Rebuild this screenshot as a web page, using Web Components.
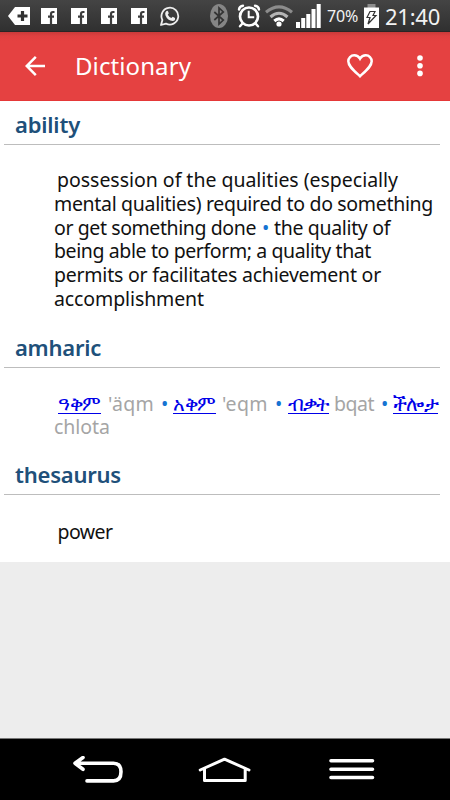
<!DOCTYPE html>
<html lang="en">
<head>
    <meta charset="UTF-8">
    <meta name="viewport" content="width=device-width, initial-scale=1.0">
    <title>Dictionary</title>
    <style>
        body {
            margin: 0;
            width: 450px;
            height: 800px;
            overflow: hidden;
            background: #ededed;
            font-family: "Noto Sans", "Open Sans", sans-serif;
        }
    </style>
</head>
<body>
    <dictionary-screen></dictionary-screen>

    <script>
        // Text run that spreads its letters over a given width
        class FitText extends HTMLElement {
            constructor() {
                super();
                this.attachShadow({ mode: 'open' });
                this.shadowRoot.innerHTML = `
                    <style>
                        :host { display: block; flex: none; }
                        span { display: inline-block; vertical-align: top; white-space: pre; }
                    </style>
                    <span><slot></slot></span>
                `;
            }

            connectedCallback() {
                const width = Number(this.getAttribute('width'));
                const span = this.shadowRoot.querySelector('span');
                const natural = span.getBoundingClientRect().width;
                const count = [...this.textContent].length;
                span.style.letterSpacing = (width - natural) / count + 'px';
                this.style.width = width + 'px';
                this.style.marginLeft = (this.getAttribute('gap') || 0) + 'px';
            }
        }

        class StatusBar extends HTMLElement {
            constructor() {
                super();
                this.attachShadow({ mode: 'open' });
                const facebook = `
                    <svg class="fb" width="16" height="16" viewBox="0 0 16 16">
                        <path fill="#fff" d="M0 0h16v16H0z"/>
                        <path fill="none" stroke="#3c3c3c" stroke-width="2.2" d="M13.500 4h-1.500Q10 4 10 6.200V16M7 8.600h6"/>
                    </svg>`;
                this.shadowRoot.innerHTML = `
                    <style>
                        :host {
                            display: flex;
                            align-items: center;
                            box-sizing: border-box;
                            height: 32px;
                            padding-left: 8px;
                            background: linear-gradient(#444, #303030);
                            border-bottom: 1px solid #292525;
                            color: #f2f2f2;
                        }
                        svg { flex: none; display: block; }
                        .add { margin-right: -3px; }
                        .fb { margin-left: 14px; }
                        .percent { font-size: 16px; line-height: 32px; }
                        .clock { font-size: 22px; line-height: 32px; }
                    </style>
                    <svg class="add" width="22" height="18" viewBox="0 0 22 18">
                        <path fill="#fff" d="M7 0h15v18H7L0 9z"/>
                        <path stroke="#333" stroke-width="3.2" d="M9.5 9h10M14.5 4v10"/>
                    </svg>
                    ${facebook}${facebook}${facebook}${facebook}
                    <svg style="margin-left:13px" width="20" height="20" viewBox="0 0 20 20">
                        <path fill="none" stroke="#eee" stroke-width="1.8" stroke-linejoin="round" d="M1 19l1.4-5A8.4 8.4 0 1 1 6 17.6z"/>
                        <path fill="#eee" d="M6.2 5.2Q7.6 4.1 8.1 5.6l.7 1.7-1 1.4Q9 11 11.4 12.1l1.3-1.3 2.3 1.1q.6 2.7-2.3 3.1Q7.6 14.9 5.4 9.3q-.8-2.5.8-4.1z"/>
                    </svg>
                    <svg style="margin-left:30px" width="18" height="24" viewBox="0 0 18 24">
                        <ellipse cx="9" cy="12" rx="9" ry="12" fill="#858585"/>
                        <path fill="none" stroke="#343434" stroke-width="1.7" d="M4.3 8l9 8L9 20V4l4.3 4-9 8"/>
                    </svg>
                    <svg style="margin-left:9px" width="24" height="24" viewBox="0 0 24 24">
                        <g fill="none" stroke="#fff">
                            <circle cx="12" cy="12.5" r="9" stroke-width="2.7"/>
                            <path stroke-width="2" d="M11.7 6.8v6.4h5.5"/>
                            <path stroke-width="2.4" stroke-linecap="round" d="M2 5.5Q2.5 2 6 1.7M22 5.5Q21.5 2 18 1.7M5 20l-2 2.3M19 20l2 2.3"/>
                        </g>
                    </svg>
                    <svg style="margin-left:4px" width="28" height="22" viewBox="0 0 28 22">
                        <g fill="none" stroke-width="3.1">
                            <path stroke="#8c8c8c" d="M1 7.3Q14-3.7 27 7.3"/>
                            <path stroke="#b5b5b5" d="M5.5 12Q14 4.5 22.5 12"/>
                            <path stroke="#fff" d="M9.3 16Q14 11.8 18.7 16"/>
                        </g>
                        <circle cx="14" cy="19" r="2.6" fill="#fff"/>
                    </svg>
                    <svg style="margin-left:3px" width="25" height="24" viewBox="0 0 25 24">
                        <path fill="#fff" d="M0 18h4v6H0zM5.2 14h4v10h-4zM10.3 10h4v14h-4zM15.5 5h4v19h-4zM20.7 0h4v24h-4z"/>
                    </svg>
                    <fit-text class="percent" width="31" gap="6">70%</fit-text>
                    <svg style="margin-left:6px" width="15" height="24" viewBox="0 0 15 24">
                        <path fill="#8c8c8c" d="M3.5 0h8v4h-8z"/>
                        <path fill="#fff" d="M0 3.5h15V24H0z"/>
                        <path fill="none" stroke="#333" stroke-width="1.2" d="M6 7.5h5L9 11.5h3L4 20l2-6.5H3z"/>
                    </svg>
                    <fit-text class="clock" width="55" gap="6">21:40</fit-text>
                `;
            }
        }

        class AppBar extends HTMLElement {
            constructor() {
                super();
                this.attachShadow({ mode: 'open' });
                this.shadowRoot.innerHTML = `
                    <style>
                        :host {
                            display: flex;
                            align-items: center;
                            box-sizing: border-box;
                            height: 69px;
                            padding-left: 25px;
                            background: linear-gradient(#c93a3a, #e04040 4px, #e54141 9px);
                            border-bottom: 1px solid #e53838;
                            color: #fff;
                            font-size: 24px;
                            line-height: 70px;
                        }
                        svg { flex: none; display: block; }
                    </style>
                    <svg width="20" height="20" viewBox="0 0 20 20">
                        <path fill="none" stroke="#fff" stroke-width="2.5" d="M20 10H2M10.8.9L1.7 10l9.1 9.1"/>
                    </svg>
                    <fit-text width="116" gap="30">Dictionary</fit-text>
                    <svg style="margin-left:156px" width="26" height="24" viewBox="0 0 26 24">
                        <path fill="none" stroke="#fff" stroke-width="2.5" d="M13 22.2C6.5 16.3 1.3 12.2 1.3 7.3c0-3.4 2.6-6 5.9-6 2.3 0 4.5 1.2 5.8 3.4 1.3-2.2 3.5-3.4 5.8-3.4 3.3 0 5.9 2.6 5.9 6 0 4.9-5.2 9-11.7 14.9z"/>
                    </svg>
                    <svg style="margin-left:44px" width="6" height="22" viewBox="0 0 6 22">
                        <g fill="#fff"><circle cx="3" cy="3" r="2.8"/><circle cx="3" cy="10.7" r="2.8"/><circle cx="3" cy="18.4" r="2.8"/></g>
                    </svg>
                `;
            }
        }

        // Heading with a rule and its indented body
        class EntrySection extends HTMLElement {
            constructor() {
                super();
                this.attachShadow({ mode: 'open' });
                this.shadowRoot.innerHTML = `
                    <style>
                        :host { display: block; box-sizing: border-box; padding: 0 10px 0 4px; }
                        header {
                            box-sizing: border-box;
                            height: 44px;
                            padding: 8px 0 0 11px;
                            border-bottom: 1px solid #bdbdbd;
                            color: #20507a;
                            font-size: 22px;
                            font-weight: 600;
                            line-height: 30px;
                        }
                        .body {
                            padding: var(--body-top, 24px) 0 0 50px;
                            font-size: 19.5px;
                            line-height: 23.75px;
                            color: #111;
                        }
                    </style>
                    <header><slot name="title"></slot></header>
                    <div class="body"><slot></slot></div>
                `;
            }
        }

        class NavBar extends HTMLElement {
            constructor() {
                super();
                this.attachShadow({ mode: 'open' });
                this.shadowRoot.innerHTML = `
                    <style>
                        :host {
                            display: flex;
                            box-sizing: border-box;
                            height: 62px;
                            padding: 17px 0 0 72px;
                            background: #000;
                            border-top: 1px solid #777;
                        }
                        svg { flex: none; display: block; }
                        path { fill: none; stroke: #fff; stroke-width: 3.6; stroke-linecap: round; stroke-linejoin: round; }
                    </style>
                    <svg width="52" height="30" viewBox="0 0 52 30">
                        <path d="M3 7.3h38.5Q49 7.3 49 15.8 49 24.9 41.5 24.9H15M11 1.5L3 7.3l8 6"/>
                    </svg>
                    <svg style="margin-left:73px" width="55" height="30" viewBox="0 0 55 30">
                        <path style="stroke-width:3" d="M3.2 14L27.5 3.2 52 14M7.5 13v11.5h40.7V13"/>
                    </svg>
                    <svg style="margin-left:77px" width="46" height="30" viewBox="0 0 46 30">
                        <path d="M2 4.8h41.5M2 13.2h41.5M2 21.5h41.5"/>
                    </svg>
                `;
            }
        }

        class DictionaryScreen extends HTMLElement {
            constructor() {
                super();
                this.attachShadow({ mode: 'open' });
                this.shadowRoot.innerHTML = `
                    <style>
                        :host { display: flex; flex-direction: column; height: 800px; }
                        main { height: 461px; background: #fff; }
                        nav-bar { margin-top: auto; }
                        .row { display: flex; height: 23.75px; }
                        a { color: #0000e8; text-decoration: underline; text-decoration-thickness: 1.3px; text-underline-offset: 2px; }
                        .dot { color: #1673d2; }
                        .latin { color: #a5a5a5; }
                    </style>
                    <status-bar></status-bar>
                    <app-bar></app-bar>
                    <main>
                        <entry-section style="height:222.5px; --body-top:23px">
                            <fit-text slot="title" width="65">ability</fit-text>
                            <fit-text width="341" gap="3">possession of the qualities (especially</fit-text>
                            <fit-text width="379">mental qualities) required to do something</fit-text>
                            <div class="row"><fit-text width="202">or get something done</fit-text><fit-text class="dot" width="6" gap="6">•</fit-text><fit-text width="116" gap="6">the quality of</fit-text></div>
                            <fit-text width="317">being able to perform; a quality that</fit-text>
                            <fit-text width="327">permits or facilitates achievement or</fit-text>
                            <fit-text width="150">accomplishment</fit-text>
                        </entry-section>
                        <entry-section style="height:127.5px">
                            <fit-text slot="title" width="86">amharic</fit-text>
                            <div class="row">
                                <fit-text width="43" gap="4"><a>ዓቅም</a></fit-text>
                                <fit-text class="latin" width="46" gap="7">'äqm</fit-text>
                                <fit-text class="dot" width="6" gap="7">•</fit-text>
                                <fit-text width="43" gap="6"><a>አቅም</a></fit-text>
                                <fit-text class="latin" width="46" gap="6">'eqm</fit-text>
                                <fit-text class="dot" width="6" gap="7">•</fit-text>
                                <fit-text width="41" gap="7"><a>ብቃት</a></fit-text>
                                <fit-text class="latin" width="40" gap="5">bqat</fit-text>
                                <fit-text class="dot" width="6" gap="7">•</fit-text>
                                <fit-text width="45" gap="6"><a>ችሎታ</a></fit-text>
                            </div>
                            <fit-text class="latin" width="56">chlota</fit-text>
                        </entry-section>
                        <entry-section style="--body-top:25px">
                            <fit-text slot="title" width="106">thesaurus</fit-text>
                            <fit-text width="55" gap="3.5">power</fit-text>
                        </entry-section>
                    </main>
                    <nav-bar></nav-bar>
                `;
            }
        }

        customElements.define('entry-section', EntrySection);
        customElements.define('status-bar', StatusBar);
        customElements.define('app-bar', AppBar);
        customElements.define('nav-bar', NavBar);
        customElements.define('dictionary-screen', DictionaryScreen);
        customElements.define('fit-text', FitText);
    </script>
</body>
</html>
